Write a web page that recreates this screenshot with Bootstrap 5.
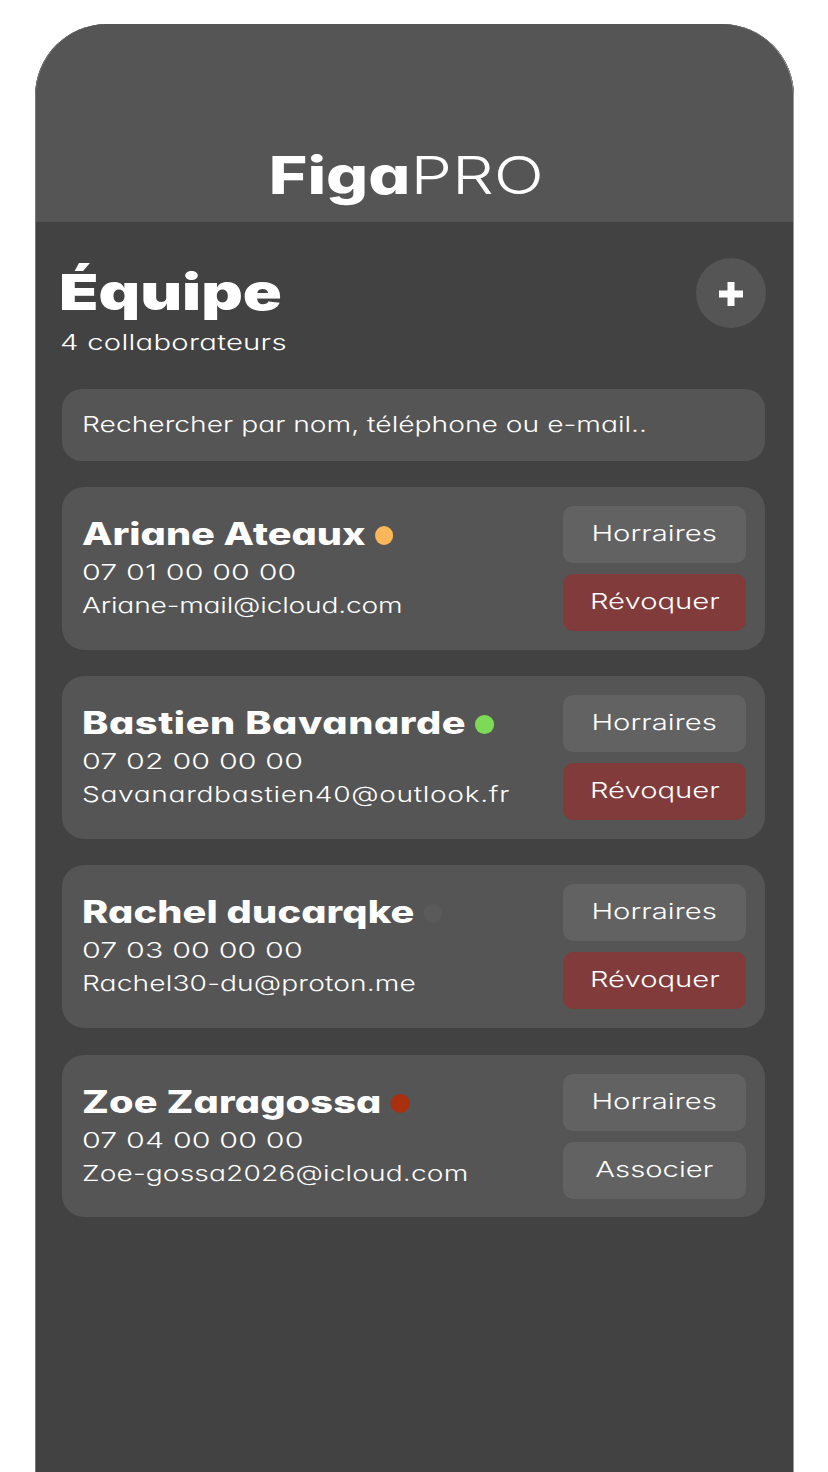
<!DOCTYPE html>
<html lang="fr">
<head>
<meta charset="utf-8">
<title>FigaPRO</title>
<link href="https://cdn.jsdelivr.net/npm/bootstrap@5.3.0/dist/css/bootstrap.min.css" rel="stylesheet">
<style>
html,body{height:1472px;overflow:hidden;background:#fff}
body{padding:24px 34px 0 35px;font-family:Inter,"DejaVu Sans",sans-serif;font-feature-settings:"cv11";color:#fff}
.phone-frame{height:1448px;background:#424242;border-radius:72px 72px 0 0;overflow:hidden;position:relative}
.phone-frame::after{content:"";position:absolute;inset:0;border-radius:inherit;box-shadow:inset -1px 0 0 #999,inset 1px 0 0 #777;pointer-events:none}
.wide-text{display:inline-block;white-space:nowrap;transform-origin:0 50%}
.app-head{height:198px;background:#555;padding:0 17px 14px 0;font-size:52px;line-height:64px}
.app-logo{transform:scaleX(1.27);transform-origin:50% 50%}
.app-logo b{font-weight:800}
.app-logo span{font-weight:300}
.app-main{padding:36px 29px 0 27px}
.page-title{font-size:50px;line-height:70px;font-weight:900;margin:-1px 0 1px -3px;transform:scaleX(1.29)}
.page-sub{font-size:22px;line-height:28px;letter-spacing:.2px;font-weight:300;margin-left:-2px;transform:scaleX(1.33)}
.add-btn{width:70px;height:70px;background:#555;border:0;margin-right:-1px}
.add-btn:hover,.add-btn:active{background:#555}
.add-btn svg{margin-top:1px}
.search-box{display:flex;align-items:center;height:72px;margin-top:33px;background:#555;border:0;border-radius:20px;padding:0 20px 2px;font-size:22px;font-weight:300;color:#fff}
.search-text{transform:scaleX(1.283)}
.member-list{gap:26px;margin-top:26px}
.member-card{height:163px;background:#555;border:0;border-radius:22px;color:#fff;padding:19px 19px 0 20px}
.member-card:last-child{height:162px;margin-top:1px}
.member-info{padding-top:10px}
.member-name{display:flex;align-items:center;gap:7px;font-size:31px;line-height:36px;font-weight:800;margin-bottom:4px;transform:scaleX(1.28)}
.name-long{letter-spacing:.45px}
.name-mid{letter-spacing:.1px}
.member-dot{flex:none;width:14.8px;height:19px;margin-top:3px;border-radius:50%}
.dot-away{background:#fdb75b}
.dot-on{background:#7ed957}
.dot-off{background:#5a5a5a}
.dot-busy{background:#a9300f}
.member-line{display:block;width:max-content;font-size:22px;line-height:33px;font-weight:300;transform:scaleX(1.28);letter-spacing:.1px}
.line-phone{letter-spacing:.1px;transform:scaleX(1.38)}
.line-tight{letter-spacing:-.15px}
.line-long{letter-spacing:.5px}
.act-col{width:183px;gap:11px}
.act-btn{height:57px;border:0;border-radius:10px;font-size:22px;font-weight:300;color:#fff;background:#626262;padding:0 0 2px}
.act-btn:hover,.act-btn:active{background:#626262;color:#fff}
.act-label{transform:scaleX(1.33);transform-origin:50% 50%}
.act-danger,.act-danger:hover,.act-danger:active{background:#823b3b}
</style>
</head>
<body>
<div class="phone-frame d-flex flex-column">
  <header class="app-head d-flex align-items-end justify-content-center"><div class="wide-text app-logo"><b>Figa</b><span>PRO</span></div></header>
  <main class="app-main">
    <div class="d-flex justify-content-between align-items-start">
      <div>
        <h1 class="page-title wide-text d-block">Équipe</h1>
        <div class="page-sub wide-text d-block">4 collaborateurs</div>
      </div>
      <button class="btn add-btn rounded-circle d-flex align-items-center justify-content-center p-0" aria-label="Ajouter">
        <svg width="24" height="24" viewBox="0 0 24 24" fill="#fff"><path d="M8.5 0h7v8.5H24v7h-8.5V24h-7v-8.5H0v-7h8.5z"/></svg>
      </button>
    </div>
    <div class="search-box"><span class="wide-text search-text">Rechercher par nom, téléphone ou e-mail..</span></div>
    <div class="member-list d-flex flex-column">
      <div class="card member-card flex-row justify-content-between">
        <div class="member-info">
          <div class="member-name wide-text">Ariane Ateaux<span class="member-dot dot-away"></span></div>
          <span class="member-line wide-text line-phone">07 01 00 00 00</span>
          <span class="member-line wide-text line-tight">Ariane-mail@icloud.com</span>
        </div>
        <div class="act-col d-flex flex-column"><button class="btn act-btn"><span class="wide-text act-label">Horraires</span></button><button class="btn act-btn act-danger"><span class="wide-text act-label">Révoquer</span></button></div>
      </div>
      <div class="card member-card flex-row justify-content-between">
        <div class="member-info">
          <div class="member-name wide-text"><span class="name-long">Bastien Bavanarde</span><span class="member-dot dot-on"></span></div>
          <span class="member-line wide-text line-phone">07 02 00 00 00</span>
          <span class="member-line wide-text line-long">Savanardbastien40@outlook.fr</span>
        </div>
        <div class="act-col d-flex flex-column"><button class="btn act-btn"><span class="wide-text act-label">Horraires</span></button><button class="btn act-btn act-danger"><span class="wide-text act-label">Révoquer</span></button></div>
      </div>
      <div class="card member-card flex-row justify-content-between">
        <div class="member-info">
          <div class="member-name wide-text"><span class="name-mid">Rachel ducarqke</span><span class="member-dot dot-off"></span></div>
          <span class="member-line wide-text line-phone">07 03 00 00 00</span>
          <span class="member-line wide-text">Rachel30-du@proton.me</span>
        </div>
        <div class="act-col d-flex flex-column"><button class="btn act-btn"><span class="wide-text act-label">Horraires</span></button><button class="btn act-btn act-danger"><span class="wide-text act-label">Révoquer</span></button></div>
      </div>
      <div class="card member-card flex-row justify-content-between">
        <div class="member-info">
          <div class="member-name wide-text"><span class="name-mid">Zoe Zaragossa</span><span class="member-dot dot-busy"></span></div>
          <span class="member-line wide-text line-phone">07 04 00 00 00</span>
          <span class="member-line wide-text">Zoe-gossa2026@icloud.com</span>
        </div>
        <div class="act-col d-flex flex-column"><button class="btn act-btn"><span class="wide-text act-label">Horraires</span></button><button class="btn act-btn"><span class="wide-text act-label">Associer</span></button></div>
      </div>
    </div>
  </main>
</div>
</body>
</html>
